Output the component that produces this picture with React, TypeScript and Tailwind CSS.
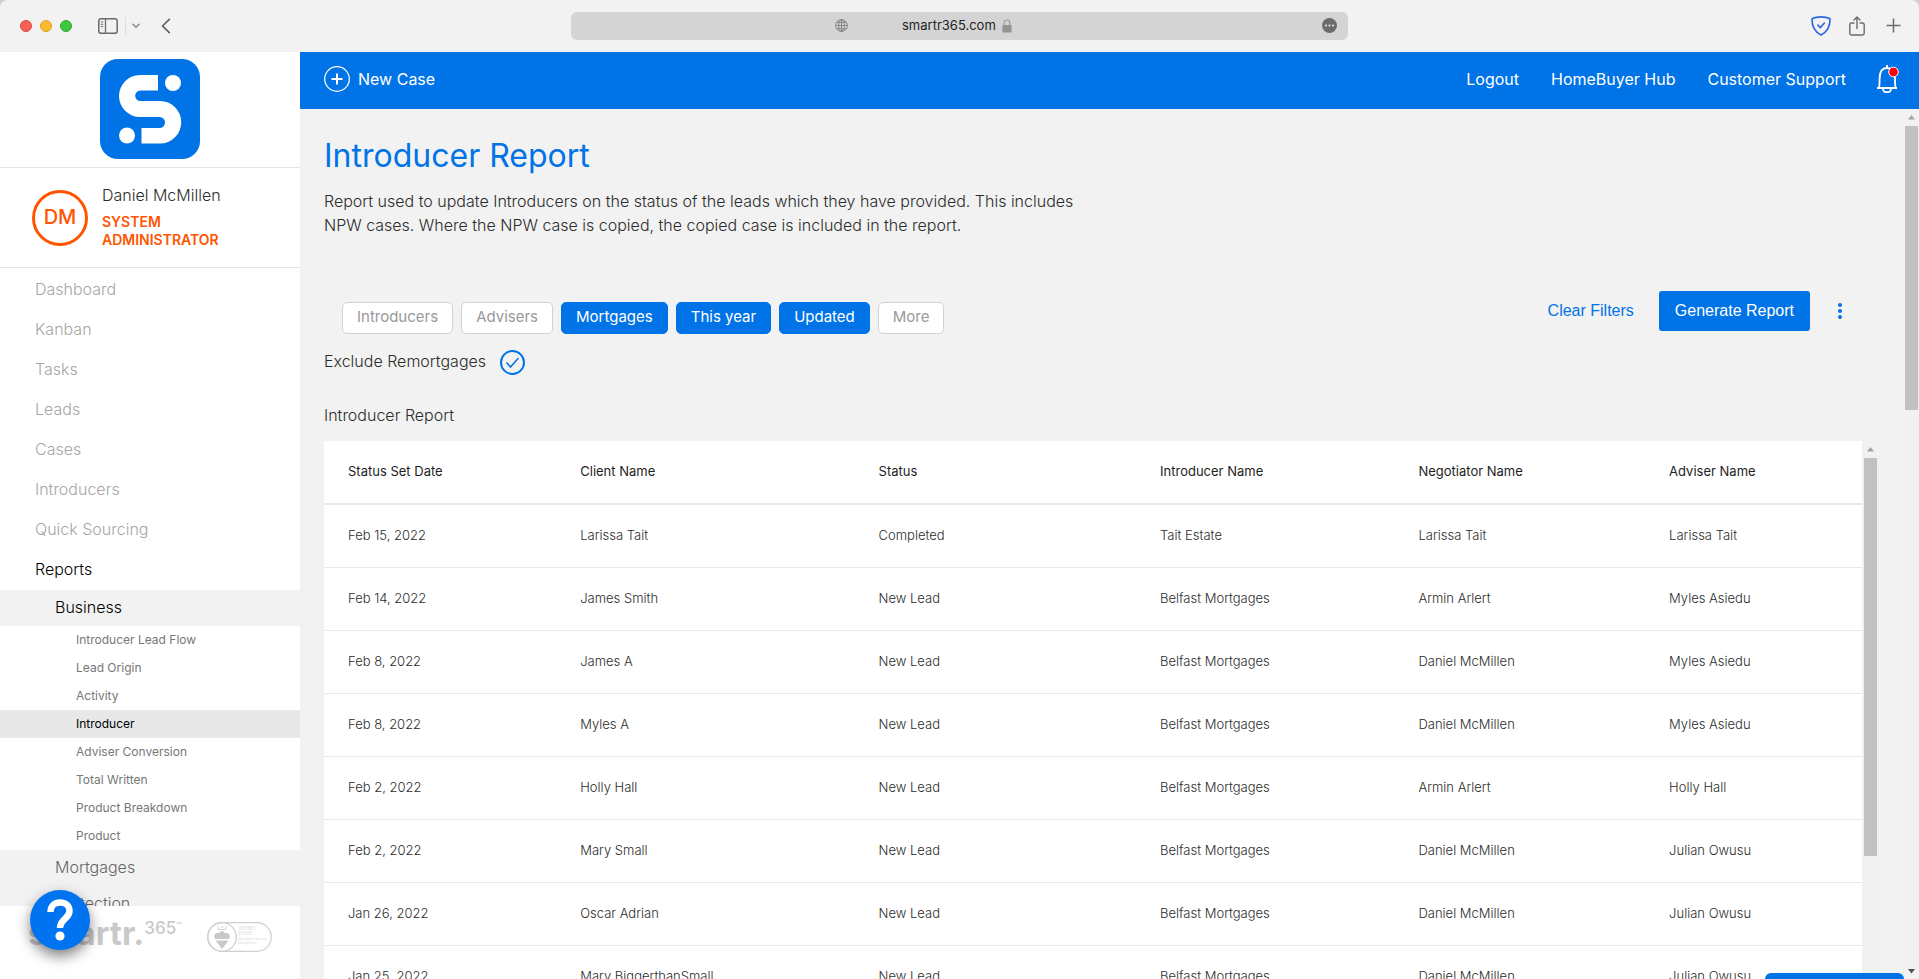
import type { ReactNode } from "react";

const mainNav = ["Dashboard", "Kanban", "Tasks", "Leads", "Cases", "Introducers", "Quick Sourcing", "Reports"];

const businessReports = [
  "Introducer Lead Flow",
  "Lead Origin",
  "Activity",
  "Introducer",
  "Adviser Conversion",
  "Total Written",
  "Product Breakdown",
  "Product",
];

const filters = [
  { label: "Introducers", active: false },
  { label: "Advisers", active: false },
  { label: "Mortgages", active: true },
  { label: "This year", active: true },
  { label: "Updated", active: true },
  { label: "More", active: false },
];

const columns = ["Status Set Date", "Client Name", "Status", "Introducer Name", "Negotiator Name", "Adviser Name"];

const rows = [
  ["Feb 15, 2022", "Larissa Tait", "Completed", "Tait Estate", "Larissa Tait", "Larissa Tait"],
  ["Feb 14, 2022", "James Smith", "New Lead", "Belfast Mortgages", "Armin Arlert", "Myles Asiedu"],
  ["Feb 8, 2022", "James A", "New Lead", "Belfast Mortgages", "Daniel McMillen", "Myles Asiedu"],
  ["Feb 8, 2022", "Myles A", "New Lead", "Belfast Mortgages", "Daniel McMillen", "Myles Asiedu"],
  ["Feb 2, 2022", "Holly Hall", "New Lead", "Belfast Mortgages", "Armin Arlert", "Holly Hall"],
  ["Feb 2, 2022", "Mary Small", "New Lead", "Belfast Mortgages", "Daniel McMillen", "Julian Owusu"],
  ["Jan 26, 2022", "Oscar Adrian", "New Lead", "Belfast Mortgages", "Daniel McMillen", "Julian Owusu"],
  ["Jan 25, 2022", "Mary BiggerthanSmall", "New Lead", "Belfast Mortgages", "Daniel McMillen", "Julian Owusu"],
];

function ChromeButton({ label, className = "", children }: { label: string; className?: string; children: ReactNode }) {
  return (
    <button type="button" aria-label={label} className={`flex shrink-0 items-center justify-center ${className}`}>
      {children}
    </button>
  );
}

function BrowserBar() {
  return (
    <div className="grid h-[52px] shrink-0 grid-cols-[1fr_777px_1fr] items-center rounded-t-lg bg-[#f2f2f2] pb-[1px]">
      <div className="flex items-center pl-5">
        <div className="flex gap-2">
          <span className="size-3 rounded-full border border-[#d94a41] bg-[#f95f57]" />
          <span className="size-3 rounded-full border border-[#d9a123] bg-[#fabc2e]" />
          <span className="size-3 rounded-full border border-[#2fae31] bg-[#3ec840]" />
        </div>
        <ChromeButton label="Show sidebar" className="ml-[26px]">
          <svg width="20" height="16" viewBox="0 0 20 16" fill="none" stroke="#6b6b6b">
            <rect x="0.8" y="0.8" width="18.4" height="14.4" rx="2.2" strokeWidth="1.5" />
            <path d="M7.5 1v14" strokeWidth="1.3" />
            <path d="M2.8 4h2.4M2.8 6.3h2.4M2.8 8.6h2.4" strokeWidth="1" />
          </svg>
        </ChromeButton>
        <span className="ml-[7px] h-[18px] w-px bg-[#dedede]" />
        <ChromeButton label="Tab groups" className="ml-[6px]">
          <svg width="8" height="6" viewBox="0 0 8 6" fill="none" stroke="#8a8a8a" strokeWidth="1.5" strokeLinecap="round">
            <path d="M1 1.2 4 4.2 7 1.2" />
          </svg>
        </ChromeButton>
        <ChromeButton label="Back" className="ml-[21px]">
          <svg width="10" height="16" viewBox="0 0 10 16" fill="none" stroke="#606060" strokeWidth="1.7" strokeLinecap="round" strokeLinejoin="round">
            <path d="M8.3 1.3 1.5 8l6.8 6.7" />
          </svg>
        </ChromeButton>
      </div>
      <div className="flex h-7 items-center rounded-md bg-[#d4d4d4] pr-[11px] pl-[264px]">
        <svg width="13" height="13" viewBox="0 0 13 13" fill="none" stroke="#808080" strokeWidth="0.9">
          <circle cx="6.5" cy="6.5" r="5.9" />
          <ellipse cx="6.5" cy="6.5" rx="2.8" ry="5.9" />
          <path d="M.6 6.5h11.8M6.5.6v11.8M1.5 3.4h10M1.5 9.6h10" />
        </svg>
        <span className="ml-[54px] text-[13px] text-[#1f1f1f]">smartr365.com</span>
        <svg className="ml-[6px]" width="10" height="14" viewBox="0 0 10 14">
          <path d="M2.2 6.5V3.8a2.8 2.8 0 0 1 5.6 0v2.7" fill="none" stroke="#9a9a9a" strokeWidth="1.2" />
          <rect x="0.4" y="6" width="9.2" height="7.6" rx="1.2" fill="#949494" />
        </svg>
        <ChromeButton label="Page settings" className="ml-auto">
          <svg width="15" height="15" viewBox="0 0 15 15">
            <circle cx="7.5" cy="7.5" r="7.5" fill="#6c6c6c" />
            <g fill="#e4e4e4">
              <circle cx="4" cy="7.5" r="1.1" />
              <circle cx="7.5" cy="7.5" r="1.1" />
              <circle cx="11" cy="7.5" r="1.1" />
            </g>
          </svg>
        </ChromeButton>
      </div>
      <div className="flex items-center justify-end pr-[18px]">
        <ChromeButton label="Privacy report">
          <svg width="20" height="20" viewBox="0 0 20 20" fill="none" stroke="#2b66e0" strokeWidth="1.6" strokeLinejoin="round" strokeLinecap="round">
            <path d="M1 2.8C4 1.2 7 .9 10 .9s6 .3 9 1.9c.2 8-2.5 13-9 16.2C3.5 15.8.8 10.8 1 2.8z" />
            <path d="m6.8 9 2.6 2.6 4-4.6" />
          </svg>
        </ChromeButton>
        <ChromeButton label="Share" className="ml-[18px]">
          <svg width="16" height="20" viewBox="0 0 16 20" fill="none" stroke="#6b6b6b" strokeWidth="1.4" strokeLinecap="round" strokeLinejoin="round">
            <path d="M5 7H2.6C1.5 7 .8 7.7.8 8.7v8.6c0 1 .7 1.7 1.8 1.7h10.8c1.1 0 1.8-.7 1.8-1.7V8.700c0-1-.7-1.700-1.800-1.700H11" />
            <path d="M8 12.5V1.2M5 4l3-3 3 3" />
          </svg>
        </ChromeButton>
        <ChromeButton label="New tab" className="ml-[21px]">
          <svg width="15" height="15" viewBox="0 0 15 15" fill="none" stroke="#6b6b6b" strokeWidth="1.5">
            <path d="M7.5.5v14M.5 7.5h14" />
          </svg>
        </ChromeButton>
      </div>
    </div>
  );
}

function BrandMark() {
  return (
    <svg width="100" height="100" viewBox="0 0 100 100" role="img" aria-label="smartr365">
      <rect width="100" height="100" rx="18" fill="#0073e6" />
      <path
        d="M58 16H40a21 21 0 0 0 0 42h19.500a5.500 5.500 0 0 1 0 11H41.500v15.500H60a21.250 21.250 0 0 0 0-42.500H40.500a5.300 5.300 0 0 1 0-10.600H58z"
        fill="#fff"
      />
      <circle cx="73" cy="24" r="8" fill="#fff" />
      <circle cx="27" cy="76.5" r="8" fill="#fff" />
    </svg>
  );
}

function Sidebar() {
  return (
    <aside className="relative flex w-[300px] shrink-0 flex-col bg-white">
      <a href="#home" className="flex h-[116px] shrink-0 justify-center border-b border-[#e4e4e4] pt-[7px]">
        <BrandMark />
      </a>
      <div className="flex h-[100px] shrink-0 items-center border-b border-[#e4e4e4] pl-8">
        <div className="flex size-14 items-center justify-center rounded-full border-3 border-[#ff5500] pb-[2px] text-xl font-medium text-[#ff5500]">
          DM
        </div>
        <div className="ml-[14px] pb-[2px]">
          <p className="text-base leading-5 font-light text-[#2c2c2c]">Daniel McMillen</p>
          <p className="mt-2 w-[140px] text-sm leading-[18px] font-semibold text-[#ff5500]">SYSTEM ADMINISTRATOR</p>
        </div>
      </div>
      <nav aria-label="Main" className="min-h-0 flex-1 overflow-hidden pt-[2px]">
        <ul>
          {mainNav.map((item) => (
            <li key={item}>
              <a
                href="#nav"
                className={`flex h-10 items-center pb-[2px] pl-[35px] text-base ${item === "Reports" ? "text-black" : "text-[#a6a6a6]"} font-light`}
              >
                {item}
              </a>
            </li>
          ))}
        </ul>
        <a href="#business" className="flex h-9 items-center bg-[#f2f2f2] pb-[2px] pl-[55px] text-base font-light text-black">
          Business
        </a>
        <ul>
          {businessReports.map((item) => (
            <li key={item}>
              <a
                href="#report"
                className={`flex h-7 items-center pl-[76px] text-xs ${item === "Introducer" ? "bg-[#e8e8e8] text-black" : "text-[#777]"}`}
              >
                {item}
              </a>
            </li>
          ))}
        </ul>
        <a href="#mortgages" className="flex h-9 items-center bg-[#f2f2f2] pb-[2px] pl-[55px] text-base font-light text-[#666]">
          Mortgages
        </a>
        <a href="#protection" className="flex h-9 items-center bg-[#f2f2f2] pb-[2px] pl-[55px] text-base font-light text-[#666]">
          Protection
        </a>
      </nav>
      <div className="flex h-[73px] shrink-0 items-start bg-white pt-3 pl-7 text-[#c9c9c9]">
        <div className="flex h-[30px] w-[151px] items-start">
          <span className="text-[33px] leading-[30px] font-bold">smartr.</span>
          <span className="text-[17px] leading-5 font-medium">365</span>
          <span className="text-[9px] leading-4">™</span>
        </div>
        <svg className="mt-1 ml-7" width="65" height="30" viewBox="0 0 65 30" role="img" aria-label="ISO/IEC 27001 certified">
          <rect x="0.7" y="0.7" width="63.6" height="28.6" rx="14.3" fill="none" stroke="#cfcfcf" strokeWidth="1.3" />
          <circle cx="15" cy="15" r="14.3" fill="none" stroke="#cfcfcf" strokeWidth="1.3" />
          <path d="M11 4v3.5h8V4M13.5 5h3" fill="none" stroke="#d6d6d6" strokeWidth="1" />
          <path d="M15 27 8.5 18.5h13zM8 17c-2-4 0-6 3-6 1.5 0 3-2 4-2s2.500 2 4 2c3 0 5 2 3 6z" fill="#c9c9c9" />
          <g fill="#d9d9d9" fontFamily="Inter, sans-serif">
            <text x="31" y="8" fontSize="5">ISO/IEC</text>
            <text x="31" y="13" fontSize="5">27001</text>
            <text x="31" y="18" fontSize="3">Information Security</text>
            <text x="31" y="22" fontSize="3">Management</text>
          </g>
        </svg>
      </div>
      <button
        type="button"
        aria-label="Help"
        className="absolute bottom-[29px] left-[30px] flex size-[60px] items-center justify-center rounded-full bg-[#0073f0] shadow-[0_6px_14px_rgba(0,0,0,0.5)]"
      >
        <svg width="28" height="42" viewBox="0 0 28 42">
          <path d="M4.5 13C4.5 7 8.5 3.5 14 3.5s9.5 3.2 9.5 8.5c0 8-9.5 7.5-9.5 17" fill="none" stroke="#fff" strokeWidth="6.5" />
          <circle cx="14" cy="37" r="4.6" fill="#fff" />
        </svg>
      </button>
    </aside>
  );
}

function TopBar() {
  return (
    <header className="flex h-[57px] shrink-0 items-center bg-[#0073e6] pr-5 pb-[3px] pl-6 text-base text-white">
      <button type="button" className="flex items-center gap-2">
        <svg width="26" height="26" viewBox="0 0 26 26" fill="none" stroke="#fff">
          <circle cx="13" cy="13" r="12.3" strokeWidth="1.2" />
          <path d="M13 7.5v11M7.5 13h11" strokeWidth="2" />
        </svg>
        New Case
      </button>
      <nav aria-label="Account" className="ml-auto flex items-center gap-8">
        <a href="#logout">Logout</a>
        <a href="#homebuyer">HomeBuyer Hub</a>
        <a href="#support">Customer Support</a>
      </nav>
      <button type="button" aria-label="Notifications" className="ml-[30px]">
        <svg width="23" height="28" viewBox="0 0 23 28" fill="none" stroke="#fff" strokeWidth="1.8">
          <path d="M11 0v3M1 23h20M3 23c.5-2 .6-4 .6-9C3.6 7 6 3 11 3s8 4 8 11c0 5 .1 7 .6 9" />
          <path d="M7 23.5c0 5 8 5 8 0" />
          <circle cx="17.5" cy="7" r="4.8" fill="#f00" strokeWidth="1" />
        </svg>
      </button>
    </header>
  );
}

function ScrollTrack({ className, thumb, down = false }: { className: string; thumb: string; down?: boolean }) {
  return (
    <div aria-hidden="true" className={`flex shrink-0 flex-col items-center bg-[#f1f1f1] ${className}`}>
      <svg className="my-[6px] shrink-0" width="7" height="5" viewBox="0 0 7 5">
        <path d="M0 4.5 3.5 0 7 4.5z" fill="#a3a3a3" />
      </svg>
      <div className={`w-[13px] bg-[#c1c1c1] ${thumb}`} />
      {down && (
        <svg className="mt-auto mb-[5px] shrink-0" width="7" height="5" viewBox="0 0 7 5">
          <path d="M0 0h7L3.5 4.5z" fill="#505050" />
        </svg>
      )}
    </div>
  );
}

function ReportTable() {
  return (
    <table className="w-full table-fixed border-collapse bg-white text-left text-[13px]">
      <colgroup>
        <col className="w-[15.1%]" />
        <col className="w-[19.4%]" />
        <col className="w-[18.3%]" />
        <col className="w-[16.8%]" />
        <col className="w-[16.3%]" />
        <col />
      </colgroup>
      <thead>
        <tr className="h-[63px] border-b-2 border-[#e8e8e8] text-[#1e1e1e]">
          {columns.map((c) => (
            <th key={c} scope="col" className="pl-6 font-normal">
              {c}
            </th>
          ))}
        </tr>
      </thead>
      <tbody>
        {rows.map((row, i) => (
          <tr key={i} className="h-[63px] border-b border-[#e8e8e8] font-light text-[#2c2c2c]">
            {row.map((cell, j) => (
              <td key={j} className="pl-6">
                {cell}
              </td>
            ))}
          </tr>
        ))}
      </tbody>
    </table>
  );
}

function ReportPage() {
  return (
    <main className="relative flex min-h-0 flex-1 bg-[#f2f2f2]">
      <div className="flex min-w-0 flex-1 flex-col overflow-hidden pr-[25px] pl-6">
        <h1 className="mt-[27px] text-[32px] leading-10 text-[#0073e6]">Introducer Report</h1>
        <p className="mt-[13px] max-w-[780px] text-base leading-6 font-light text-[#2c2c2c]">
          Report used to update Introducers on the status of the leads which they have provided. This includes NPW cases. Where
          the NPW case is copied, the copied case is included in the report.
        </p>
        <div className="mt-[54px] flex items-start justify-between">
          <div className="mt-[11px] ml-[18px] flex gap-2">
            {filters.map((f) => (
              <button
                key={f.label}
                type="button"
                aria-pressed={f.active}
                className={`h-8 rounded-[5px] border px-[14px] pb-[2px] text-[15px] ${f.active ? "border-[#0073e6] bg-[#0073e6] text-white" : "border-[#d2d2d2] bg-white text-[#999]"}`}
              >
                {f.label}
              </button>
            ))}
          </div>
          <div className="mr-[37px] flex items-center font-['Liberation_Sans',Arial,sans-serif] text-base">
            <button type="button" className="text-[#0073e6]">
              Clear Filters
            </button>
            <button type="button" className="ml-[25px] h-10 rounded-[3px] bg-[#0073e6] px-4 text-white">
              Generate Report
            </button>
            <button type="button" aria-label="More actions" className="ml-7">
              <svg width="4" height="16" viewBox="0 0 4 16" fill="#0073e6">
                <circle cx="2" cy="2" r="2" />
                <circle cx="2" cy="8" r="2" />
                <circle cx="2" cy="14" r="2" />
              </svg>
            </button>
          </div>
        </div>
        <label className="mt-[15px] flex items-center gap-[14px] self-start font-light text-[#2c2c2c]">
          <span className="pb-[2px]">Exclude Remortgages</span>
          <span className="relative flex size-[25px]">
            <input type="checkbox" defaultChecked className="size-[25px] appearance-none rounded-full border-2 border-[#0073e6]" />
            <svg className="pointer-events-none absolute inset-0" width="25" height="25" viewBox="0 0 25 25" fill="none" stroke="#0073e6" strokeWidth="1.5">
              <path d="m6.5 12.5 4 4.5 8-9" />
            </svg>
          </span>
        </label>
        <h2 className="mt-7 text-base leading-6 font-light text-[#2c2c2c]">Introducer Report</h2>
        <div className="mt-[14px] flex min-h-0 flex-1 overflow-hidden">
          <div className="min-w-0 flex-1">
            <ReportTable />
          </div>
          <ScrollTrack className="w-[17px]" thumb="h-[398px]" />
        </div>
      </div>
      <ScrollTrack className="w-[15px]" thumb="h-[284px]" down />
      <button
        type="button"
        aria-label="Open chat"
        className="absolute right-[15px] bottom-0 h-[6px] w-[139px] rounded-t-md bg-[#0073e6]"
      />
    </main>
  );
}

export default function App() {
  return (
    <div className="flex h-screen flex-col overflow-hidden bg-[#cfcfd6] font-[Inter,'Liberation_Sans',sans-serif]">
      <BrowserBar />
      <div className="flex min-h-0 flex-1">
        <Sidebar />
        <div className="flex min-w-0 flex-1 flex-col">
          <TopBar />
          <ReportPage />
        </div>
      </div>
    </div>
  );
}
